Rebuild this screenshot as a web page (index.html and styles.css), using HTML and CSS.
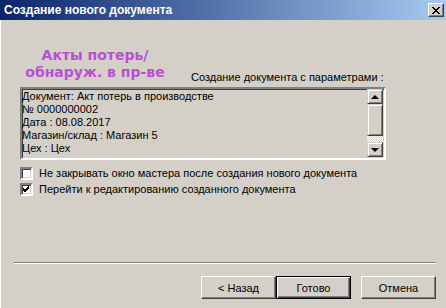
FILE: index.html
```html
<!DOCTYPE html>
<html lang="ru">
<head>
  <meta charset="UTF-8" />
  <title>Создание нового документа</title>
  <link rel="stylesheet" href="styles.css">
</head>
<body>
  <div class="window">
    <div class="titlebar">
      <span class="title">Создание нового документа</span>
      <span class="close-btn">
        <svg width="8" height="7" viewBox="0 0 8 7"><path d="M0 0 L7 7 M1 0 L8 7 M7 0 L0 7 M8 0 L1 7" stroke="#000" stroke-width="1" fill="none"/></svg>
      </span>
    </div>

    <div class="content">
      <div class="top">
        <div class="heading">Акты потерь/<br>обнаруж. в пр-ве</div>
        <div class="label">Создание документа с параметрами :</div>
      </div>

      <div class="listbox">
        <div class="list-text">
          <div>Документ: Акт потерь в производстве</div>
          <div>№ 0000000002</div>
          <div>Дата : 08.08.2017</div>
          <div>Магазин/склад : Магазин 5</div>
          <div>Цех : Цех</div>
        </div>
        <div class="scrollbar">
          <div class="sb-btn"><span class="arrow up"></span></div>
          <div class="sb-thumb"></div>
          <div class="sb-track"></div>
          <div class="sb-btn"><span class="arrow down"></span></div>
        </div>
      </div>

      <label class="check-row">
        <span class="checkbox"></span>
        Не закрывать окно мастера после создания нового документа
      </label>
      <label class="check-row">
        <span class="checkbox">
          <svg width="7" height="7" viewBox="0 0 7 7"><path d="M0 2 L2 4 L6 0 M0 3 L2 5 L6 1 M0 4 L2 6 L6 2" stroke="#000" stroke-width="1" fill="none"/></svg>
        </span>
        Перейти к редактированию созданного документа
      </label>
    </div>

    <div class="footer">
      <div class="separator"></div>
      <div class="buttons">
        <button class="btn">&lt; Назад</button>
        <button class="btn default">Готово</button>
        <button class="btn cancel">Отмена</button>
      </div>
    </div>
  </div>
</body>
</html>
```

FILE: styles.css
```css
html, body {
  margin: 0;
  padding: 0;
}
body {
  font-family: 'Liberation Sans', Arial, sans-serif;
  font-size: 11px;
  color: #000;
  background: #d4d0c8;
}
.window {
  width: 446px;
  height: 308px;
  display: flex;
  flex-direction: column;
  background: #d4d0c8;
  box-shadow: inset 2px 0 0 -1px #fff;
}
.titlebar {
  height: 20px;
  display: flex;
  align-items: center;
  justify-content: space-between;
  padding: 0 2px 0 4px;
  background: linear-gradient(to right, #0a246a, #a6caf0);
}
.title {
  color: #fff;
  font-weight: bold;
  font-size: 12px;
}
.close-btn {
  width: 14px;
  height: 12px;
  display: flex;
  align-items: center;
  justify-content: center;
  background: #d4d0c8;
  border: 1px solid;
  border-color: #fff #404040 #404040 #fff;
  box-shadow: inset -1px -1px 0 #808080;
}
.content {
  padding: 0 0 0 20px;
}
.top {
  display: flex;
  align-items: flex-end;
  margin-top: 27px;
}
.heading {
  width: 150px;
  text-align: center;
  font-family: 'DejaVu Sans', Verdana, sans-serif;
  font-weight: bold;
  font-size: 14px;
  line-height: 17px;
  color: #b84fd4;
}
.label {
  margin-left: 21px;
  margin-bottom: -2px;
}
.listbox {
  width: 362px;
  height: 69px;
  margin-top: 6px;
  display: flex;
  border: 2px solid;
  border-color: #808080 #fff #fff #808080;
  box-shadow: inset 1px 1px 0 #404040, inset -1px -1px 0 #d4d0c8;
}
.list-text {
  flex: 1;
  padding-top: 1px;
  line-height: 13px;
  white-space: nowrap;
}
.scrollbar {
  width: 16px;
  display: flex;
  flex-direction: column;
  margin: 0 1px 1px 0;
}
.sb-btn,
.sb-thumb {
  box-sizing: border-box;
  background: #d4d0c8;
  border: 1px solid;
  border-color: #d4d0c8 #404040 #404040 #d4d0c8;
  box-shadow: inset 1px 1px 0 #fff, inset -1px -1px 0 #808080;
}
.sb-btn {
  height: 15px;
  display: flex;
  align-items: center;
  justify-content: center;
}
.sb-thumb {
  height: 32px;
}
.sb-track {
  flex: 1;
  background-color: #fff;
  background-image: repeating-conic-gradient(#d4d0c8 0 25%, #fff 0 50%);
  background-size: 2px 2px;
}
.arrow {
  width: 0;
  height: 0;
  border-left: 4px solid transparent;
  border-right: 4px solid transparent;
}
.arrow.up {
  border-bottom: 4px solid #000;
}
.arrow.down {
  border-top: 4px solid #000;
}
.check-row {
  display: flex;
  align-items: center;
  gap: 6px;
  height: 16px;
}
.check-row:first-of-type {
  margin-top: 5px;
}
.checkbox {
  width: 9px;
  height: 9px;
  display: flex;
  align-items: center;
  justify-content: center;
  background: #fff;
  border: 2px solid;
  border-color: #808080 #fff #fff #808080;
  box-shadow: inset 1px 1px 0 #404040, inset -1px -1px 0 #d4d0c8;
}
.footer {
  margin-top: auto;
  padding: 0 10px 9px 14px;
}
.separator {
  border-top: 1px solid #808080;
  border-bottom: 1px solid #fff;
}
.buttons {
  display: flex;
  justify-content: flex-end;
  margin-top: 12px;
}
.btn {
  width: 75px;
  height: 23px;
  box-sizing: border-box;
  font-family: 'Liberation Sans', Arial, sans-serif;
  font-size: 11px;
  color: #000;
  background: #d4d0c8;
  border: 1px solid;
  border-color: #fff #404040 #404040 #fff;
  box-shadow: inset -1px -1px 0 #808080;
  padding: 0;
}
.btn.default {
  border: 1px solid #000;
  box-shadow: inset 1px 1px 0 #fff, inset -1px -1px 0 #404040, inset -2px -2px 0 #808080;
}
.btn.cancel {
  margin-left: 10px;
}
```
